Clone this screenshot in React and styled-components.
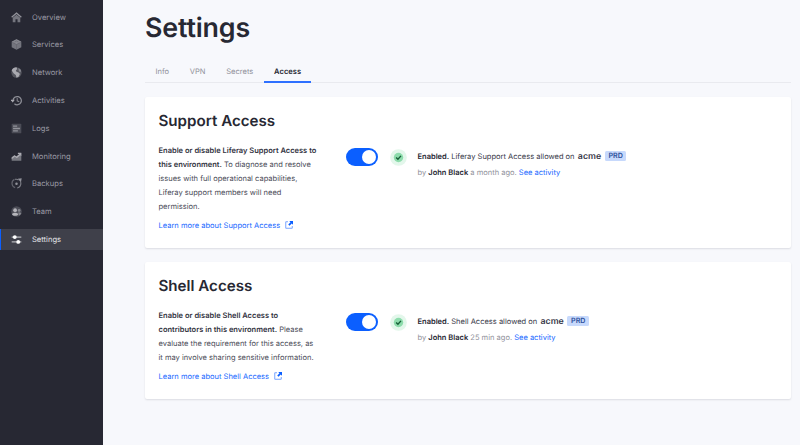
import React from 'react';
import styled, { createGlobalStyle } from 'styled-components';

const Global = createGlobalStyle`
  * { box-sizing: border-box; }
  body {
    margin: 0;
    background: #f7f8fc;
    overflow: hidden;
    font-family: Inter, sans-serif;
    text-rendering: geometricPrecision;
  }
  h1, h2, p { margin: 0; }
  a { color: #1a69ff; text-decoration: none; }
`;

const Page = styled.div`
  display: flex;
  width: 800px;
  height: 445px;
  color: #272833;
`;

const Sidebar = styled.nav`
  width: 103px;
  flex: none;
  padding-top: 6.6px;
  background: #272833;
`;

const NavItem = styled.div`
  display: flex;
  align-items: center;
  height: 21px;
  margin-bottom: 6.8px;
  padding-left: ${(p) => (p.$active ? 9.5 : 10.5)}px;
  border-left: ${(p) => (p.$active ? '1px solid #0b5fff' : '0')};
  background: ${(p) => (p.$active ? '#3f404a' : 'transparent')};
  color: ${(p) => (p.$active ? '#e4e4e8' : '#9a9aa4')};
  font-size: 7.6px;

  svg { width: 11px; height: 11px; margin-right: 10.5px; flex: none; }
`;

const Main = styled.main`
  flex: 1;
  padding: 9px 9px 0 42px;
`;

const Title = styled.h1`
  height: 38px;
  line-height: 38px;
  font-size: 26.8px;
  font-weight: 600;
  letter-spacing: -0.15px;
`;

const Tabs = styled.div`
  display: flex;
  height: 36px;
  align-items: flex-end;
  border-bottom: 1px solid #e9eaef;
`;

const Tab = styled.div`
  height: 23px;
  margin-bottom: -1px;
  padding: 0 ${(p) => p.$pad}px;
  line-height: 23px;
  font-size: 7.55px;
  font-weight: ${(p) => (p.$active ? 600 : 400)};
  color: ${(p) => (p.$active ? '#272833' : '#91929b')};
  border-bottom: ${(p) => (p.$active ? '2px solid #2e70ff' : '0')};
`;

const Card = styled.section`
  height: ${(p) => p.$height}px;
  margin-top: ${(p) => p.$gap}px;
  padding: 14px 13.5px 0;
  background: #fff;
  border-radius: 2px;
  box-shadow: 0 1px 2px rgba(39, 40, 51, 0.13);
`;

const CardTitle = styled.h2`
  height: 20px;
  line-height: 20px;
  font-size: 15.15px;
  font-weight: 600;
`;

const CardBody = styled.div`
  display: flex;
  align-items: flex-start;
  margin-top: 12.6px;
`;

const About = styled.div`
  width: 187.5px;
  flex: none;
  padding-top: 0.5px;
  font-size: 7.52px;
  line-height: 13.9px;
  white-space: nowrap;
  color: #4b4c58;

  b { color: #33343f; font-weight: 600; }
`;

const LearnMore = styled.a`
  display: flex;
  align-items: center;
  margin-top: 5px;

  svg { width: 8px; height: 8px; margin: -1px 0 0 4.7px; }
`;

const Toggle = styled.div`
  display: flex;
  justify-content: flex-end;
  width: 32px;
  height: 18px;
  margin-top: 4.7px;
  padding: 1.7px;
  flex: none;
  border-radius: 9px;
  background: #0b5fff;
`;

const Knob = styled.span`
  width: 14.5px;
  height: 14.5px;
  border-radius: 50%;
  background: #fff;
`;

const StatusIcon = styled.svg`
  width: 17px;
  height: 17px;
  margin: 5px 11px 0 11.5px;
  flex: none;
`;

const Status = styled.div`
  font-size: 7.52px;
  white-space: nowrap;
  color: #91929b;

  b { color: #272833; font-weight: 600; }
`;

const StatusLine = styled.div`
  display: flex;
  align-items: center;
  height: 16px;
  margin-top: ${(p) => p.$top}px;
  color: ${(p) => (p.$dark ? '#393a4a' : 'inherit')};
`;

const Project = styled.strong`
  margin: 0 3.7px 0 3.3px;
  font-size: 8.8px;
  font-weight: 600;
`;

const Badge = styled.span`
  width: 21.5px;
  height: 10px;
  border-radius: 1.5px;
  background: #c7d9fc;
  color: #2c509b;
  font-size: 7.1px;
  font-weight: 600;
  line-height: 10px;
  text-align: center;
`;

const icons = {
  Overview: (
    <>
      <path d="M0.3 7 8 0.5 15.7 7l-1.3 1.5L8 3 1.6 8.500Z" fill="#92929a" />
      <path d="M2.500 8.500 8 4l5.500 4.500V15h-4v-4.500h-3V15h-4Z" fill="#74757e" />
    </>
  ),
  Services: (
    <>
      <path d="M8 0.500 15 4v8l-7 3.700L1 12V4Z" fill="#74757e" />
      <path d="m1 4 7-3.500L15 4 8 7.500Z" fill="#85868e" />
      <path d="m2 5 6 3 6-3M8 8v7M5 4.500 8 3l3 1.500" fill="none" stroke="#61626b" strokeWidth="0.8" />
    </>
  ),
  Network: (
    <>
      <circle cx="8" cy="8" r="7.500" fill="#55565f" />
      <path d="M1 5C2 2 5 .5 8 .5L9 3 7 5 8 7l3 1 2 2-2 4-3 1.500-1-4-3-2Z" fill="#a9a9b0" />
      <path d="m11 1.500 3.500 3-.5 3-2-1-1-2Z" fill="#85868e" />
    </>
  ),
  Activities: (
    <>
      <path d="M3 8a6 6 0 1 1 2 4.700" fill="none" stroke="#8d8e96" strokeWidth="1.800" />
      <path d="M-.5 7h6L2.500 10.800Z" fill="#a9a9b0" />
      <path d="M9 4.500V8.500l3 1.200" fill="none" stroke="#85868e" strokeWidth="1.500" />
    </>
  ),
  Logs: (
    <>
      <rect x="1" y="1" width="14" height="14" rx="1" fill="#4b4c56" />
      <path d="M3 4.500h6M3 8h10M3 11.500h7" stroke="#92939b" strokeWidth="1.900" />
    </>
  ),
  Monitoring: (
    <>
      <path d="M1 14V9l4-3 3 2 7-5v11Z" fill="#777880" />
      <path d="m1 9.500 4-3.500 3 2 4-3.500h-2V2.500h5v5L13.500 6 8.500 10.500l-3-2L1 12Z" fill="#aaaab1" />
    </>
  ),
  Backups: (
    <>
      <path d="M6 14A6.500 6.500 0 0 1 5 2" fill="none" stroke="#62636d" strokeWidth="1.700" />
      <path d="M6 2A6 6 0 0 1 11 3M14 6A6.500 6.500 0 0 1 9 14.500" fill="none" stroke="#7c7d86" strokeWidth="1.700" />
      <path d="m10 1 5.500-.5-1 6Z" fill="#92939b" />
      <circle cx="8" cy="8.500" r="1.800" fill="#92939b" />
    </>
  ),
  Team: (
    <>
      <circle cx="8" cy="8" r="7.700" fill="#4b4c56" />
      <circle cx="6" cy="6" r="2.700" fill="#b5b5bb" />
      <path d="M1.500 12c1-3 8-3 9 0-1 3-8 3-9 0Z" fill="#b5b5bb" />
      <circle cx="11.800" cy="6.500" r="2" fill="#85868e" />
      <path d="M10.500 9.500c2-.5 4 0 4.500 1l-2 3h-1.500Z" fill="#85868e" />
    </>
  ),
  Settings: (
    <>
      <path d="M1 4.500h14M1 11.500h14" stroke="#b5b5bb" strokeWidth="1.900" />
      <circle cx="5.500" cy="4.500" r="2.800" fill="#fff" />
      <circle cx="10.500" cy="11.500" r="2.800" fill="#fff" />
    </>
  ),
};

function ExternalIcon() {
  return (
    <svg viewBox="0 0 16 16">
      <path d="M6 1.500H1.500v13h13V10" fill="none" stroke="#78a5ff" strokeWidth="2" />
      <path d="M8.500 0H16v7.500l-2.500-2.500L9 9.500 6.500 7 11 2.500Z" fill="#0b5fff" />
    </svg>
  );
}

function StatusRow({ feature, when }) {
  return (
    <>
      <Toggle><Knob /></Toggle>
      <StatusIcon viewBox="0 0 18 18">
        <circle cx="9" cy="9" r="8.800" fill="#e3f7eb" />
        <circle cx="9" cy="9" r="5" fill="#8ddcac" />
        <path d="m6.500 9 1.900 1.900 3.200-3.600" fill="none" stroke="#155e36" strokeWidth="1.500" />
      </StatusIcon>
      <Status>
        <StatusLine $top={4.500} $dark>
          <span><b>Enabled.</b> {feature} allowed on</span>
          <Project>acme</Project>
          <Badge>PRD</Badge>
        </StatusLine>
        <StatusLine $top={0}>
          <span>by <b>John Black</b> {when}. <a>See activity</a></span>
        </StatusLine>
      </Status>
    </>
  );
}

export default function App() {
  return (
    <>
      <Global />
      <Page>
        <Sidebar>
          {Object.entries(icons).map(([name, icon]) => (
            <NavItem key={name} $active={name === 'Settings'}>
              <svg viewBox="0 0 16 16">{icon}</svg>
              {name}
            </NavItem>
          ))}
        </Sidebar>
        <Main>
          <Title>Settings</Title>
          <Tabs>
            <Tab $pad={10.4}>Info</Tab>
            <Tab $pad={10.4}>VPN</Tab>
            <Tab $pad={10.4}>Secrets</Tab>
            <Tab $pad={10.4} $active>Access</Tab>
          </Tabs>
          <Card $height={150.500} $gap={14}>
            <CardTitle>Support Access</CardTitle>
            <CardBody>
              <About>
                <p>
                  <b>Enable or disable Liferay Support Access to<br />this environment.</b> To diagnose and resolve<br />
                  issues with full operational capabilities,<br />Liferay support members will need<br />permission.
                </p>
                <LearnMore>Learn more about Support Access <ExternalIcon /></LearnMore>
              </About>
              <StatusRow feature="Liferay Support Access" when="a month ago" />
            </CardBody>
          </Card>
          <Card $height={137} $gap={14.500}>
            <CardTitle>Shell Access</CardTitle>
            <CardBody>
              <About>
                <p>
                  <b>Enable or disable Shell Access to<br />contributors in this environment.</b> Please<br />
                  evaluate the requirement for this access, as<br />it may involve sharing sensitive information.
                </p>
                <LearnMore>Learn more about Shell Access <ExternalIcon /></LearnMore>
              </About>
              <StatusRow feature="Shell Access" when="25 min ago" />
            </CardBody>
          </Card>
        </Main>
      </Page>
    </>
  );
}
